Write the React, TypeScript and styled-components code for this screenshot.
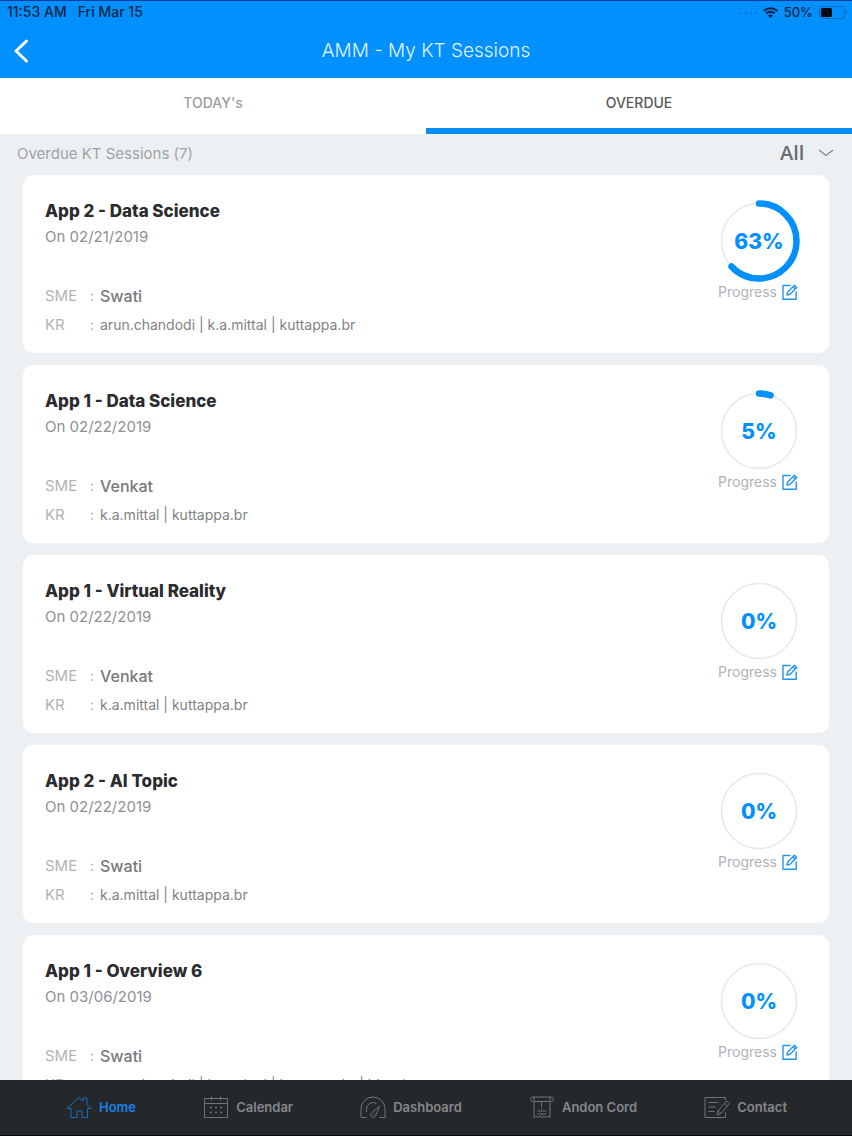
import React from "react";
import styled, { createGlobalStyle } from "styled-components";

const BLUE = "#0190fe";

const GlobalStyle = createGlobalStyle`
  *, *::before, *::after { box-sizing: border-box; }
  body {
    margin: 0;
    background: #edf0f2;
    font-family: Inter, "Liberation Sans", sans-serif;
    color: #808285;
  }
  button, select { font: inherit; color: inherit; border: 0; background: none; padding: 0; margin: 0; }
  h1, h2, p, dl, dd, dt, ul { margin: 0; padding: 0; font-weight: inherit; }
`;

const Screen = styled.div`
  display: flex;
  flex-direction: column;
  height: 100vh;
  overflow: hidden;
`;

const Header = styled.header`
  flex: none;
  background: ${BLUE};
  border-top: 1px solid #0a3fa0;
`;

const StatusBar = styled.div`
  display: flex;
  align-items: center;
  justify-content: space-between;
  height: 22px;
  padding: 0 5px 0 7px;
  color: #0a2747;
`;

const StatusGroup = styled.div<{ $gap: number; $size: number }>`
  display: flex;
  align-items: center;
  gap: ${(p) => p.$gap}px;
  font-size: ${(p) => p.$size}px;
  line-height: 20px;
  font-weight: 500;
`;

const TitleBar = styled.div`
  display: grid;
  grid-template-columns: 44px 1fr 44px;
  align-items: center;
  height: 55px;
`;

const BackButton = styled.button`
  display: flex;
  align-items: center;
  height: 44px;
  padding-left: 13px;
`;

const Title = styled.h1`
  text-align: center;
  font-size: 19px;
  line-height: 24px;
  font-weight: 300;
  color: #e4f3ff;
`;

const Tabs = styled.div`
  flex: none;
  display: flex;
  background: #fff;
`;

const Tab = styled.button<{ $active?: boolean }>`
  flex: 1;
  height: 56px;
  font-size: 14px;
  line-height: 20px;
  font-weight: 500;
  color: ${(p) => (p.$active ? "#58595b" : "#9c9ea1")};
  border-bottom: 6px solid ${(p) => (p.$active ? "#078df4" : "transparent")};
`;

const FilterBar = styled.div`
  flex: none;
  display: flex;
  align-items: center;
  justify-content: space-between;
  height: 38px;
  padding: 0 18px 0 17px;
  font-size: 15px;
  color: #a0a3a6;
`;

const FilterLabel = styled.label`
  display: flex;
  align-items: center;
  gap: 13px;
`;

const FilterSelect = styled.select`
  appearance: none;
  font-family: "Open Sans", "Noto Sans", sans-serif;
  font-size: 20px;
  line-height: 24px;
  font-weight: 600;
  color: #6d6e71;
`;

const SessionList = styled.ul`
  flex: 1;
  min-height: 0;
  overflow-y: auto;
  scrollbar-width: none;
  display: flex;
  flex-direction: column;
  gap: 12px;
  padding: 3px 23px 12px;
  list-style: none;
`;

const Card = styled.li`
  flex: none;
  display: flex;
  justify-content: space-between;
  min-height: 178px;
  padding: 24px 28px 16px 22px;
  background: #fff;
  border-radius: 10px;
`;

const SessionTitle = styled.h2`
  font-size: 17px;
  line-height: 24px;
  font-weight: 800;
  color: #2b2c2e;
`;

const SessionDate = styled.p`
  margin-top: 2px;
  font-size: 15px;
  line-height: 24px;
  color: #8e9093;
`;

const Details = styled.dl`
  display: grid;
  grid-template-columns: 45px 10px 1fr;
  row-gap: 5px;
  margin-top: 35px;
  line-height: 24px;
`;

const Term = styled.dt`
  font-size: 15px;
  color: #b1b3b6;
`;

const Colon = styled.span`
  font-size: 14px;
  color: #a5a7aa;
`;

const Value = styled.dd<{ $strong?: boolean }>`
  font-size: ${(p) => (p.$strong ? 16 : 14)}px;
  font-weight: ${(p) => (p.$strong ? 500 : 400)};
  color: ${(p) => (p.$strong ? "#77787b" : "#808285")};
`;

const ProgressColumn = styled.div`
  flex: none;
  display: flex;
  flex-direction: column;
  align-items: center;
  width: 84px;
`;

const Gauge = styled.div`
  display: grid;
  place-items: center;
  width: 84px;
  height: 84px;
  > * { grid-area: 1 / 1; }
`;

const Percent = styled.span`
  font-size: 21px;
  line-height: 22px;
  padding-top: 2px;
  font-weight: 800;
  color: ${BLUE};
`;

const EditButton = styled.button`
  display: flex;
  align-items: center;
  gap: 5px;
  padding-right: 2px;
  font-size: 14px;
  line-height: 18px;
  color: #b1b3b6;
`;

const TabBar = styled.nav`
  flex: none;
  display: flex;
  justify-content: space-between;
  height: 56px;
  padding: 0 65px 2px 66px;
  background: #25282b;
  border-bottom: 1px solid #08080a;
`;

const NavLink = styled.a<{ $active?: boolean }>`
  display: flex;
  align-items: center;
  gap: 7px;
  font-size: 13px;
  font-weight: 600;
  text-decoration: none;
  color: ${(p) => (p.$active ? "#1b7fe8" : "#85878a")};
`;

const NavIcon = styled.svg`
  width: 26px;
  height: 24px;
  fill: none;
  stroke: currentColor;
  stroke-width: 1;
  stroke-linejoin: round;
  opacity: 0.8;
`;

const RADIUS = 37.5;
const LENGTH = 2 * Math.PI * RADIUS;

function Ring({ value }: { value: number }) {
  return (
    <svg width="84" height="84" viewBox="0 0 84 84" fill="none" aria-hidden="true">
      <circle cx="42" cy="42" r={RADIUS} stroke="#e6e8ef" strokeWidth="1.5" />
      {value > 0 && (
        <circle
          cx="42"
          cy="42"
          r={RADIUS}
          stroke={BLUE}
          strokeWidth="6.5"
          strokeLinecap="round"
          strokeDasharray={`${(LENGTH * value) / 100} ${LENGTH}`}
          transform="rotate(-90 42 42)"
        />
      )}
    </svg>
  );
}

function EditIcon() {
  return (
    <svg width="16" height="16" viewBox="0 0 16 16" fill="none" stroke="#2295ec" strokeWidth="1.4" strokeLinejoin="round" aria-hidden="true">
      <path d="M8.500 1.500H1v13.700h13.200V7.500" />
      <path d="M5 11l.700-3L12.500 1.200l2.300 2.200L8 10.200zM11 2.700l2.300 2.200" />
    </svg>
  );
}

interface Session {
  title: string;
  date: string;
  sme: string;
  kr: string[];
  progress: number;
}

const sessions: Session[] = [
  { title: "App 2 - Data Science", date: "02/21/2019", sme: "Swati", kr: ["arun.chandodi", "k.a.mittal", "kuttappa.br"], progress: 63 },
  { title: "App 1 - Data Science", date: "02/22/2019", sme: "Venkat", kr: ["k.a.mittal", "kuttappa.br"], progress: 5 },
  { title: "App 1 - Virtual Reality", date: "02/22/2019", sme: "Venkat", kr: ["k.a.mittal", "kuttappa.br"], progress: 0 },
  { title: "App 2 - AI Topic", date: "02/22/2019", sme: "Swati", kr: ["k.a.mittal", "kuttappa.br"], progress: 0 },
  { title: "App 1 - Overview 6", date: "03/06/2019", sme: "Swati", kr: ["arun.chandodi", "k.a.mittal", "kuttappa.br", "bharti"], progress: 0 },
];

function SessionCard({ session }: { session: Session }) {
  return (
    <Card>
      <div>
        <SessionTitle>{session.title}</SessionTitle>
        <SessionDate>On {session.date}</SessionDate>
        <Details>
          <Term>SME</Term>
          <Colon>:</Colon>
          <Value $strong>{session.sme}</Value>
          <Term>KR</Term>
          <Colon>:</Colon>
          <Value>{session.kr.join(" | ")}</Value>
        </Details>
      </div>
      <ProgressColumn>
        <Gauge>
          <Ring value={session.progress} />
          <Percent>{session.progress}%</Percent>
        </Gauge>
        <EditButton>
          Progress
          <EditIcon />
        </EditButton>
      </ProgressColumn>
    </Card>
  );
}

const navItems = [
  {
    label: "Home",
    icon: (
      <path d="M1 13.500L13 2.500l4 3.500V3h4v6.500l4 4h-3.500V22.500h-5.500v-6.500h-5v6.500h-6v-9z" />
    ),
  },
  {
    label: "Calendar",
    icon: (
      <>
        <path d="M1.500 3.500h23v19h-23zM1.500 8.500h23M8.500 1.500v4M17.500 1.500v4" />
        <path d="M7 12.500h2M12 12.500h2M17 12.500h2M7 17.500h2M12 17.500h2M17 17.500h2" strokeWidth="1.600" />
      </>
    ),
  },
  {
    label: "Dashboard",
    icon: (
      <path d="M6.500 22.500h-5.500v-8.500a12 12 0 0 1 24 0v8.500h-5.500M6.500 17v-3a6.500 6.500 0 0 1 10-5.500M19.500 11l-3.700 9.500a2.500 2.500 0 1 1-4-2.500zM13.500 20.500l1.500-2" />
    ),
  },
  {
    label: "Andon Cord",
    icon: (
      <path d="M4 2h18M5 6.500h16M4.500 6.500h-.500a2.200 2.200 0 1 1 1-4V22.500l2-1.500 2 1.500 2-1.500 2 1.500 2-1.500 2 1.500 2-1.500 2 1.500V2.500a2.200 2.200 0 1 1 1 4M12.500 6.500v5M12.500 12.500v1.500M8.500 16h8.500M8.500 19h8.500" />
    ),
  },
  {
    label: "Contact",
    icon: (
      <path d="M21.500 5V2.500H1v20h20.500v-5M4.500 7.500h10M4.500 12h7M4.500 16.500h6M14 16l8.500-10 3 2.500-8.500 10-4 1.500zM14 16l3 2.500M20.500 8.500l3 2.500" />
    ),
  },
];

export default function App() {
  return (
    <Screen>
      <GlobalStyle />
      <Header>
        <StatusBar>
          <StatusGroup $gap={11} $size={14}>
            <span>11:53 AM</span>
            <span>Fri Mar 15</span>
          </StatusGroup>
          <StatusGroup $gap={6} $size={13}>
            <svg width="18" height="4" viewBox="0 0 18 4" fill="#0b6bc4" aria-hidden="true">
              <circle cx="2" cy="3" r="1" />
              <circle cx="7" cy="3" r="1" />
              <circle cx="12" cy="3" r="1" />
              <circle cx="17" cy="3" r="1" />
            </svg>
            <svg width="15" height="11" viewBox="0 0 15 11" fill="none" stroke="#062448" strokeWidth="2.100" aria-hidden="true">
              <path d="M.800 4a9.600 9.600 0 0 1 13.400 0M3.200 6.600a6.100 6.100 0 0 1 8.600 0" />
              <path d="M7.500 11L5.100 8.600a3.400 3.400 0 0 1 4.800 0z" fill="#062448" stroke="none" />
            </svg>
            <span>50%</span>
            <svg width="28" height="13" viewBox="0 0 28 13" aria-hidden="true">
              <rect x=".5" y=".5" width="25" height="12" rx="3" fill="none" stroke="#0869c3" />
              <rect x="2" y="2" width="11" height="9" rx="1.500" fill="#020a14" />
              <path d="M26.500 4.500a2.200 2.200 0 0 1 0 4z" fill="#0869c3" />
            </svg>
          </StatusGroup>
        </StatusBar>
        <TitleBar>
          <BackButton aria-label="Back">
            <svg width="16" height="24" viewBox="0 0 16 24" fill="none" stroke="#fff" strokeWidth="3" strokeLinecap="round" strokeLinejoin="round" aria-hidden="true">
              <path d="M13.500 2L3 12l10.500 10" />
            </svg>
          </BackButton>
          <Title>AMM - My KT Sessions</Title>
        </TitleBar>
      </Header>
      <Tabs role="tablist">
        <Tab role="tab" aria-selected="false">TODAY's</Tab>
        <Tab role="tab" aria-selected="true" $active>OVERDUE</Tab>
      </Tabs>
      <FilterBar>
        <span>Overdue KT Sessions (7)</span>
        <FilterLabel>
          <FilterSelect aria-label="Filter sessions">
            <option>All</option>
          </FilterSelect>
          <svg width="16" height="8" viewBox="0 0 16 8" fill="none" stroke="#808285" strokeWidth="1.200" aria-hidden="true">
            <path d="M1 1l7 5.500L15 1" />
          </svg>
        </FilterLabel>
      </FilterBar>
      <SessionList>
        {sessions.map((session) => (
          <SessionCard key={session.title} session={session} />
        ))}
      </SessionList>
      <TabBar>
        {navItems.map((item, index) => (
          <NavLink key={item.label} href={`#${item.label}`} $active={index === 0}>
            <NavIcon viewBox="0 0 26 24" aria-hidden="true">{item.icon}</NavIcon>
            {item.label}
          </NavLink>
        ))}
      </TabBar>
    </Screen>
  );
}
